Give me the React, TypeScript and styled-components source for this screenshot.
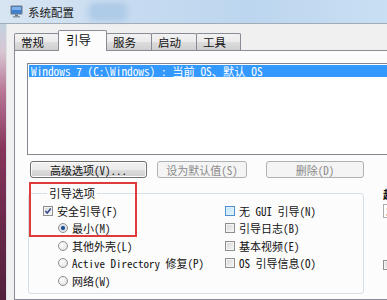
import React from 'react';
import styled, {createGlobalStyle} from 'styled-components';

const uiFont = `"Noto Sans Mono CJK SC", "Liberation Mono", "Noto Sans CJK SC", monospace`;
const titleFont = `"Noto Sans CJK SC", "Noto Sans", sans-serif`;

const GlobalStyle = createGlobalStyle`
	html, body {
		margin: 0;
		padding: 0;
		background: #f0f0f0;
	}
	body {
		width: 387px;
		height: 300px;
		overflow: hidden;
	}
`;

const Screen = styled.div`
	position: relative;
	width: 387px;
	height: 300px;
	overflow: hidden;
	display: flex;
	flex-direction: column;
`;

const TitleBar = styled.div`
	flex: none;
	height: 23px;
	display: flex;
	align-items: center;
	padding-left: 10px;
	background: linear-gradient(90deg, #d8e5f2 0%, #c6dbf0 35%, #bcd6ef 65%, #c9dff3 100%);
	border-bottom: 1px solid #a2acb7;
`;

const TitleText = styled.span`
	margin-left: 5px;
	font-family: ${titleFont};
	font-size: 11.5px;
	color: #1b1b1b;
`;

const TitleSmudge = styled.span`
	width: 40px;
	height: 16px;
	margin-left: 14px;
	border-radius: 6px;
	background: linear-gradient(180deg, #9dbddf 0%, #b7d1ec 50%, #9fbfe0 100%);
	filter: blur(3px);
`;

const FrameRow = styled.div`
	flex: 1;
	display: flex;
	min-height: 0;
`;

const LeftFrame = styled.div`
	flex: none;
	width: 6px;
	background: linear-gradient(180deg, #c3d2e1 0%, #d8c6d2 10%, #b87896 24%, #87355d 45%, #6a284b 72%, #52203b 100%);
`;

const Body = styled.div`
	flex: 1;
	display: flex;
	flex-direction: column;
	background: #f0f0f0;
	border-left: 1px solid #dde2e7;
	padding: 5px 0 0 7px;
	min-width: 0;
`;

const TabStrip = styled.div`
	display: flex;
	align-items: flex-end;
	height: 21px;
	position: relative;
	z-index: 1;
`;

const Tab = styled.div<{$active?: boolean; $w: number}>`
	box-sizing: border-box;
	width: ${(p) => p.$w}px;
	height: ${(p) => (p.$active ? 21 : 17)}px;
	margin-bottom: ${(p) => (p.$active ? -1 : 0)}px;
	margin-left: -1px;
	padding: ${(p) => (p.$active ? '1px 0 0 7px' : '1px 0 0 6px')};
	border: 1px solid #898c95;
	border-bottom: none;
	border-radius: 2px 2px 0 0;
	background: ${(p) =>
		p.$active ? '#fcfcfc' : 'linear-gradient(180deg, #f2f2f2 0%, #ebebeb 50%, #dddddd 51%, #cfcfcf 100%)'};
	font-family: ${titleFont};
	font-size: ${(p) => (p.$active ? 12.5 : 11.5)}px;
	line-height: 15px;
	color: #111;
	&:first-child {
		margin-left: 0;
	}
`;

const Panel = styled.div`
	flex: 1;
	width: 560px;
	box-sizing: border-box;
	border: 1px solid #898c95;
	background: #fcfcfc;
	padding: 12px 0 0 12px;
	font-family: ${uiFont};
	font-size: 11px;
	color: #111;
`;

const ListBox = styled.div`
	box-sizing: border-box;
	width: 520px;
	height: 92px;
	border: 1px solid #828790;
	background: #fff;
	padding: 1px;
`;

const ListRow = styled.div<{$selected?: boolean}>`
	height: 12px;
	line-height: 12px;
	padding-left: 2px;
	font-size: 11.3px;
	white-space: pre;
	background: ${(p) => (p.$selected ? '#3399ff' : 'transparent')};
	color: ${(p) => (p.$selected ? '#fff' : '#000')};
`;

const ButtonRow = styled.div`
	display: flex;
	margin-top: 6px;
	padding-left: 3px;
`;

const Button = styled.div<{$w: number; $ml?: number; $disabled?: boolean}>`
	flex: none;
	box-sizing: border-box;
	width: ${(p) => p.$w}px;
	height: 17px;
	margin-left: ${(p) => p.$ml || 0}px;
	display: flex;
	align-items: center;
	justify-content: center;
	border: 1px solid ${(p) => (p.$disabled ? '#adb2b5' : '#707070')};
	border-radius: 3px;
	background: ${(p) =>
		p.$disabled
			? '#f4f4f4'
			: 'linear-gradient(180deg, #f2f2f2 0%, #ebebeb 50%, #dddddd 51%, #cfcfcf 100%)'};
	box-shadow: inset 0 0 0 1px ${(p) => (p.$disabled ? '#f4f4f4' : '#fcfcfc')};
	color: ${(p) => (p.$disabled ? '#8a8a8a' : '#111')};
	white-space: pre;
`;

const Lower = styled.div`
	display: flex;
	align-items: flex-start;
	margin-top: 8px;
`;

const GroupBox = styled.fieldset`
	flex: none;
	box-sizing: border-box;
	width: 336px;
	height: 108px;
	margin: 0 0 0 1px;
	padding: 2px 0 0 14px;
	border: 1px solid #d5dfe5;
	border-radius: 3px;
	box-shadow: inset 1px 1px 0 #fff, 1px 1px 0 #fff;
	min-inline-size: 0;
`;

const Legend = styled.legend`
	margin-left: 4px;
	padding: 0 2px;
	font-family: ${uiFont};
	font-size: 11.5px;
	line-height: 14px;
	color: #111;
`;

const Columns = styled.div`
	display: grid;
	grid-template-columns: 182px 1fr;
`;

const Column = styled.div`
	display: flex;
	flex-direction: column;
`;

const Option = styled.div<{$indent?: number}>`
	display: flex;
	align-items: center;
	gap: 4px;
	height: 17.5px;
	padding-left: ${(p) => p.$indent || 0}px;
	white-space: pre;
`;

const Check = styled.span<{$hot?: boolean}>`
	position: relative;
	flex: none;
	box-sizing: border-box;
	width: 10px;
	height: 10px;
	border: 1px solid ${(p) => (p.$hot ? '#4f8fcf' : '#8f8f8f')};
	background: ${(p) =>
		p.$hot ? 'linear-gradient(135deg, #bfe2f8 0%, #e8f6fd 100%)' : 'linear-gradient(135deg, #d6d6d6 0%, #f6f6f6 100%)'};
	box-shadow: inset 0 0 0 1px ${(p) => (p.$hot ? '#dff1fc' : '#f4f4f4')};
	& > svg {
		position: absolute;
		left: 0;
		top: 0;
	}
`;

const Radio = styled.span<{$on?: boolean}>`
	flex: none;
	box-sizing: border-box;
	width: 10px;
	height: 10px;
	border-radius: 50%;
	border: 1px solid #8f8f8f;
	background: ${(p) =>
		p.$on
			? 'radial-gradient(circle, #17407a 0%, #2d66a8 35%, #d9dde2 40%, #f6f6f6 100%)'
			: 'radial-gradient(circle at 35% 35%, #ffffff 0%, #dadada 100%)'};
`;

const SideColumn = styled.div`
	flex: none;
	display: flex;
	flex-direction: column;
	margin-left: 19px;
	margin-top: 2px;
	white-space: pre;
`;

const SideLabel = styled.div`
	line-height: 13px;
	font-weight: bold;
	color: #111;
`;

const TimeoutBox = styled.div`
	box-sizing: border-box;
	width: 50px;
	height: 14px;
	margin-top: 3px;
	border: 1px solid #abadb3;
	background: #fff;
	line-height: 12px;
	padding-left: 2px;
`;

const PermanentRow = styled(Option)`
	margin-top: 38px;
`;

const Annotation = styled.div`
	position: absolute;
	left: 29px;
	top: 182px;
	width: 108px;
	height: 55px;
	box-sizing: border-box;
	border: 2px solid #df3b3b;
	pointer-events: none;
`;

const MonitorIcon = () => (
	<svg width="13" height="13" viewBox="0 0 13 13">
		<rect x="0.5" y="0.5" width="12" height="9" rx="1" fill="#6d7a89" />
		<rect x="1.5" y="1.5" width="10" height="7" fill="#3f7fd0" />
		<rect x="2" y="2" width="9" height="3" fill="#7fb2ec" />
		<rect x="5" y="9.5" width="3" height="1.5" fill="#6d7a89" />
		<rect x="3" y="11" width="7" height="1.5" fill="#8b96a3" />
	</svg>
);

const CheckMark = () => (
	<svg width="8" height="8" viewBox="0 0 8 8">
		<path d="M1.2 4 L3.2 6 L6.8 1.4" fill="none" stroke="#3b4f8f" strokeWidth="1.6" />
	</svg>
);

const CheckOption: React.FC<{label: string; checked?: boolean; hot?: boolean}> = ({label, checked, hot}) => (
	<Option>
		<Check $hot={hot}>{checked && <CheckMark />}</Check>
		{label}
	</Option>
);

const RadioOption: React.FC<{label: string; on?: boolean}> = ({label, on}) => (
	<Option $indent={15}>
		<Radio $on={on} />
		{label}
	</Option>
);

const tabs = ['常规', '引导', '服务', '启动', '工具'];
const tabWidths = [45, 49, 46, 46, 45];

const App = () => (
	<Screen>
		<GlobalStyle />
		<TitleBar>
			<MonitorIcon />
			<TitleText>系统配置</TitleText>
			<TitleSmudge />
		</TitleBar>
		<FrameRow>
			<LeftFrame />
			<Body>
				<TabStrip>
					{tabs.map((t, i) => (
						<Tab key={t} $active={i === 1} $w={tabWidths[i]}>
							{t}
						</Tab>
					))}
				</TabStrip>
				<Panel>
					<ListBox>
						<ListRow $selected>Windows 7 (C:\Windows) : 当前 OS、默认 OS</ListRow>
					</ListBox>
					<ButtonRow>
						<Button $w={117}>高级选项(V)...</Button>
						<Button $w={90} $ml={10} $disabled>
							设为默认值(S)
						</Button>
						<Button $w={98} $ml={19} $disabled>
							删除(D)
						</Button>
					</ButtonRow>
					<Lower>
						<GroupBox>
							<Legend>引导选项</Legend>
							<Columns>
								<Column>
									<CheckOption label="安全引导(F)" checked />
									<RadioOption label="最小(M)" on />
									<RadioOption label="其他外壳(L)" />
									<RadioOption label="Active Directory 修复(P)" />
									<RadioOption label="网络(W)" />
								</Column>
								<Column>
									<CheckOption label="无 GUI 引导(N)" hot />
									<CheckOption label="引导日志(B)" />
									<CheckOption label="基本视频(E)" />
									<CheckOption label="OS 引导信息(O)" />
								</Column>
							</Columns>
						</GroupBox>
						<SideColumn>
							<SideLabel>超时(T):</SideLabel>
							<TimeoutBox>30</TimeoutBox>
							<PermanentRow>
								<Check />
								使所有引导设置成为永久设置(K)
							</PermanentRow>
						</SideColumn>
					</Lower>
				</Panel>
			</Body>
		</FrameRow>
		<Annotation />
	</Screen>
);

export default App;
